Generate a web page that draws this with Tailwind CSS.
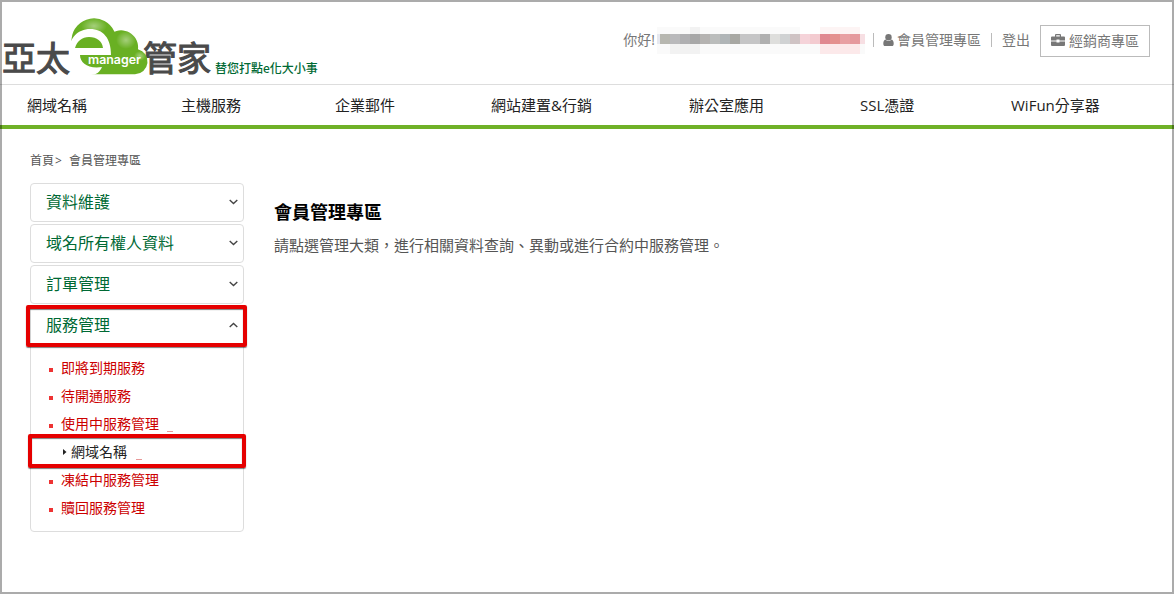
<!DOCTYPE html>
<html lang="zh-Hant">
<head>
    <meta charset="UTF-8">
    <meta name="viewport" content="width=device-width, initial-scale=1.0">
    <script src="https://cdn.jsdelivr.net/npm/@tailwindcss/browser@4"></script>
    <title>會員管理專區</title>
</head>
<body class="relative h-[594px] overflow-hidden bg-white font-['Open_Sans','Noto_Sans_CJK_TC',sans-serif] text-[#555]">
    <header>
        <div class="flex h-[85px] items-start justify-between border-b border-[#ddd] pr-6">
            <a href="#" class="block">
                <svg width="330" height="84" viewBox="0 0 330 84">
                    <defs>
                        <radialGradient id="shine">
                            <stop offset="0" stop-color="#fff" stop-opacity=".4"/>
                            <stop offset="1" stop-color="#fff" stop-opacity="0"/>
                        </radialGradient>
                    </defs>
                    <g class="font-['Noto_Sans_CJK_TC',sans-serif]" font-weight="400" font-size="34" fill="#4a4a4a" stroke="#4a4a4a" stroke-width="1.1">
                        <text x="2" y="71">亞太</text>
                        <text x="143" y="71">管家</text>
                    </g>
                    <path d="M71.500 40A22.500 22.500 0 0 1 114.500 32.500A17 17 0 0 1 138 50A12.700 12.700 0 0 1 135 75H88L72 60Z" fill="#69b023" transform="translate(0 -.8)"/>
                    <ellipse cx="94" cy="26" rx="13" ry="8" fill="url(#shine)"/>
                    <ellipse cx="126" cy="40" rx="10" ry="9" fill="url(#shine)"/>
                    <ellipse cx="140" cy="56" rx="6" ry="5" fill="url(#shine)"/>
                    <path d="M69 52C69 38 78 29 90 29C103 29 111 38 111 55H80C80 63 88 69 102 67C100 72 96 75 91 75C78 75 69 66 69 52Z" fill="#fff"/>
                    <path d="M75 48C77 41 82 37 89 37C97 37 102 41 103 48Z" fill="#69b023"/>
                    <text x="88" y="64" class="font-['Inter',sans-serif]" font-weight="600" font-size="12" textLength="53" lengthAdjust="spacingAndGlyphs" fill="#fff">manager</text>
                    <text x="215" y="73" class="font-['Noto_Sans_CJK_TC',sans-serif]" font-weight="500" font-size="12" fill="#006934">替您打點e化大小事</text>
                </svg>
            </a>
            <div class="mt-[25px] flex h-8 items-center text-sm text-[#777]">
                <span class="-mt-0.5">你好!</span>
                <!-- masked account name -->
                <svg class="mr-2 mb-0.5 ml-0.5" width="208" height="28" viewBox="0 0 208 28" shape-rendering="crispEdges">
                    <path d="M0 1h143v7H0zM0 18h208v10H0z" fill="#fafafa"/>
                    <path d="M13 18h30v10H13zM33 1h10v7H33z" fill="#f2f2f2"/>
                    <path d="M163 1h40v7h-40z" fill="#fdf4f4"/>
                    <path d="M163 18h40v10h-40z" fill="#fce9ea"/>
                    <path d="M0 8h3v10H0z" fill="#e6e8ef"/>
                    <path d="M3 8h10v10H3z" fill="#b7b7b0"/>
                    <path d="M13 8h10v10H13z" fill="#b9b9bb"/>
                    <path d="M23 8h10v10H23z" fill="#b0b0b2"/>
                    <path d="M33 8h10v10H33z" fill="#a8a8a8"/>
                    <path d="M43 8h10v10H43z" fill="#b5b3b1"/>
                    <path d="M53 8h10v10H53z" fill="#bbbdbc"/>
                    <path d="M63 8h10v10H63z" fill="#b0b5b7"/>
                    <path d="M73 8h10v10H73z" fill="#a8a8a3"/>
                    <path d="M83 8h20v10H83z" fill="#c5c5c6"/>
                    <path d="M103 8h10v10h-10z" fill="#b0b0b0"/>
                    <path d="M113 8h10v10h-10z" fill="#dededc"/>
                    <path d="M123 8h10v10h-10z" fill="#d0d2d3"/>
                    <path d="M133 8h10v10h-10z" fill="#cfc3c4"/>
                    <path d="M143 8h10v10h-10z" fill="#f5d3d9"/>
                    <path d="M153 8h10v10h-10z" fill="#f3cbd0"/>
                    <path d="M163 8h10v10h-10z" fill="#e08890"/>
                    <path d="M173 8h10v10h-10z" fill="#e4908e"/>
                    <path d="M183 8h10v10h-10z" fill="#e8a0a3"/>
                    <path d="M193 8h10v10h-10z" fill="#e5999d"/>
                    <path d="M203 8h5v10h-5z" fill="#f7dfe3"/>
                </svg>
                <a href="#" class="-mt-0.5 flex items-center border-l border-[#bbb] pl-[9px] leading-[14px]">
                    <svg class="mr-[3px]" width="11" height="12" viewBox="0 0 11 12" fill="#777">
                        <circle cx="5.500" cy="3.200" r="3.200"/>
                        <path d="M2.500 5.500C1 6 .3 7.500.3 9.500C.3 11.500 1 12 2 12H9C10 12 10.700 11.500 10.700 9.500C10.700 7.500 10 6 8.500 5.500Q5.500 8.500 2.500 5.500Z"/>
                    </svg>
                    會員管理專區
                </a>
                <a href="#" class="-mt-0.5 ml-[10px] border-l border-[#bbb] pl-[10px] leading-[14px]">登出</a>
                <a href="#" class="ml-[10px] flex h-8 w-[110px] items-center border border-[#bbb] pl-[10px]">
                    <svg class="mr-1 -mt-0.5" width="14" height="12" viewBox="0 0 14 12" fill="#777">
                        <path d="M4 2.500V1Q4 0 5 0H9Q10 0 10 1V2.500H13Q14 2.500 14 3.500V6.500H8.500V5.500H5.500V6.500H0V3.500Q0 2.500 1 2.500ZM5.200 2.500H8.800V1.200H5.200Z" fill-rule="evenodd"/>
                        <path d="M0 7.500H5.500V8.500H8.500V7.500H14V11Q14 12 13 12H1Q0 12 0 11Z"/>
                    </svg>
                    經銷商專區
                </a>
            </div>
        </div>
        <nav class="flex h-11 items-center border-b-4 border-[#6fb127] pl-[27px] text-[15px] text-[#222]">
            <a href="#" class="w-[154px]">網域名稱</a>
            <a href="#" class="w-[154px]">主機服務</a>
            <a href="#" class="w-[156px]">企業郵件</a>
            <a href="#" class="w-[198px]">網站建置&amp;行銷</a>
            <a href="#" class="w-[171px]">辦公室應用</a>
            <a href="#" class="w-[151px]">SSL憑證</a>
            <a href="#">WiFun分享器</a>
        </nav>
    </header>

    <div class="px-[30px] pt-[23px]">
        <p class="h-[31px] text-xs leading-[18px]">首頁<span class="mr-[7px] ml-px">&gt;</span>會員管理專區</p>
        <div class="flex gap-[30px]">
            <aside class="w-[214px] shrink-0 text-base text-[#006934]">
                <div class="mb-0.5 flex h-[39px] items-center justify-between rounded border border-[#ddd] pr-[5px] pb-px pl-[15px]">
                    資料維護
                    <svg class="mb-px" width="9" height="6" viewBox="0 0 9 6" fill="none" stroke="#444" stroke-width="1.4"><path d="M.7 1L4.500 4.500L8.300 1"/></svg>
                </div>
                <div class="mb-0.5 flex h-[39px] items-center justify-between rounded border border-[#ddd] pr-[5px] pb-px pl-[15px]">
                    域名所有權人資料
                    <svg class="mb-px" width="9" height="6" viewBox="0 0 9 6" fill="none" stroke="#444" stroke-width="1.4"><path d="M.7 1L4.500 4.500L8.300 1"/></svg>
                </div>
                <div class="mb-0.5 flex h-[39px] items-center justify-between rounded border border-[#ddd] pr-[5px] pb-px pl-[15px]">
                    訂單管理
                    <svg class="mb-px" width="9" height="6" viewBox="0 0 9 6" fill="none" stroke="#444" stroke-width="1.4"><path d="M.7 1L4.500 4.500L8.300 1"/></svg>
                </div>
                <div class="relative h-[226px] rounded border border-[#ddd]">
                    <div class="flex h-[37px] items-center justify-between pr-[5px] pb-px pl-[15px]">
                        服務管理
                        <svg class="mb-px" width="9" height="6" viewBox="0 0 9 6" fill="none" stroke="#444" stroke-width="1.4"><path d="M.7 5L4.500 1.500L8.300 5"/></svg>
                    </div>
                    <ul class="pt-[10px] pl-[18px] text-sm leading-7 text-[#cc0000]">
                        <li class="flex items-center gap-2"><i class="mt-1 size-1 bg-[#ee3333]"></i>即將到期服務</li>
                        <li class="flex items-center gap-2"><i class="mt-1 size-1 bg-[#ee3333]"></i>待開通服務</li>
                        <li class="flex items-center gap-2"><i class="mt-1 size-1 bg-[#ee3333]"></i>使用中服務管理<i class="mt-[15px] h-px w-[6px] bg-[#e89999]"></i></li>
                        <li class="flex items-center pl-[14px] text-[#222]">
                            <svg class="mr-1 mb-px" width="4" height="6" viewBox="0 0 4 6" fill="#222"><path d="M0 0L3.500 3L0 6Z"/></svg>
                            網域名稱<i class="mt-[15px] ml-[9px] h-px w-[6px] bg-[#e89999]"></i>
                        </li>
                        <li class="flex items-center gap-2"><i class="mt-1 size-1 bg-[#ee3333]"></i>凍結中服務管理</li>
                        <li class="flex items-center gap-2"><i class="mt-1 size-1 bg-[#ee3333]"></i>贖回服務管理</li>
                    </ul>
                    <!-- highlight frames -->
                    <div class="absolute -top-0.5 -left-[5px] h-[42px] w-[221px] rounded-xs border-4 border-[#e50000] shadow-[0_1px_1px_rgba(0,0,0,0.5),inset_0_1px_1px_rgba(0,0,0,0.5)]"></div>
                    <div class="absolute top-[127px] -left-[3px] h-[34px] w-[218px] rounded-xs border-4 border-[#e50000] shadow-[0_1px_1px_rgba(0,0,0,0.5),inset_0_1px_1px_rgba(0,0,0,0.5)]"></div>
                </div>
            </aside>
            <main class="pt-[15px]">
                <h1 class="text-lg leading-7 font-bold text-black">會員管理專區</h1>
                <p class="mt-[7px] text-[15px] leading-6">請點選管理大類，進行相關資料查詢、異動或進行合約中服務管理。</p>
            </main>
        </div>
    </div>

    <div class="pointer-events-none absolute inset-0 border-2 border-black/33"></div>
</body>
</html>
